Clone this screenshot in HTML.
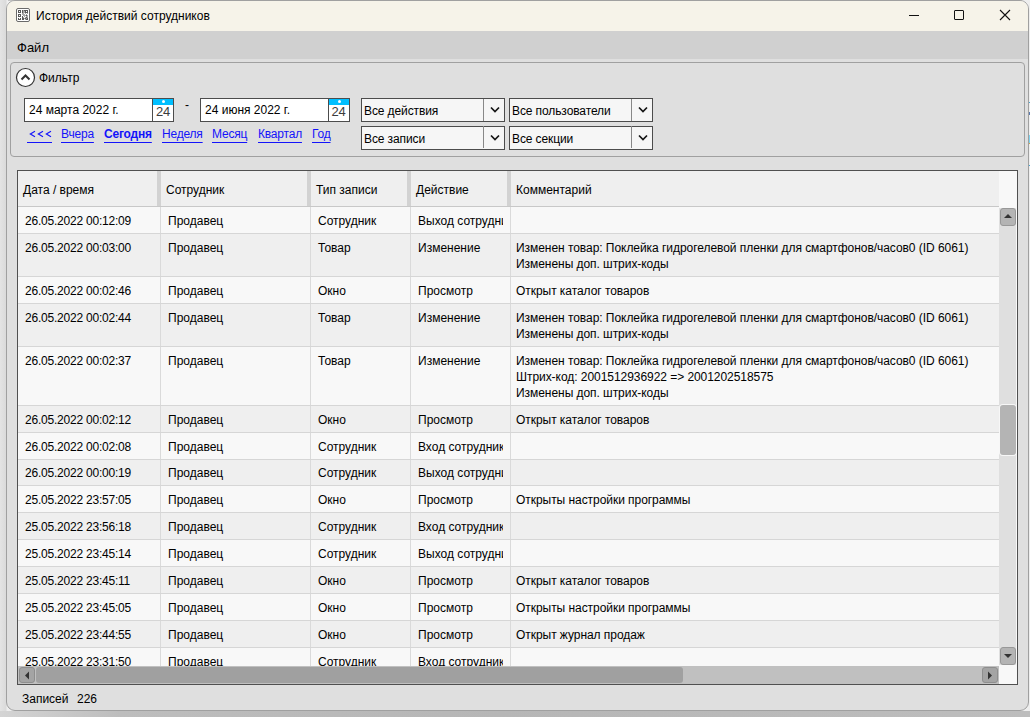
<!DOCTYPE html>
<html><head><meta charset="utf-8">
<style>
*{box-sizing:border-box;margin:0;padding:0}
html,body{width:1030px;height:717px;overflow:hidden;background:#ECECEC;font-family:"Liberation Sans",sans-serif;font-size:12px;color:#000}
.a{position:absolute}
#bg{left:0;top:0;width:1030px;height:717px;background:linear-gradient(90deg,#E4E4E4 0px,#DADADA 6px,#EEEEEE 7px)}
#bgb{left:0;top:711px;width:1030px;height:6px;background:linear-gradient(90deg,#D4D4D4 0px,#BDBDBD 120px,#B6B6B6 500px,#BDBDBD 1030px)}
#bgt{left:8px;top:0;width:1014px;height:1px;background:#C4C4C4}
#win{left:6px;top:0px;width:1023px;height:711px;border:1px solid #A0A0A0;border-radius:9px;background:#DFDFDF;overflow:hidden}
#title{left:7px;top:1px;width:1021px;height:30px;background:#F6F3E9;border-radius:8px 8px 0 0}
#menu{left:7px;top:31px;width:1021px;height:28px;background:#D0D0D0}
.t{position:absolute;white-space:nowrap;line-height:16px}
#grp{left:10px;top:62px;width:1015px;height:95px;border:1px solid #A0A0A0;border-radius:4px;background:#DFDFDF}
.box{position:absolute;background:#fff;border:1px solid #4C4C4C}
.cb{position:absolute;background:#F6F6F6;border:1px solid #4C4C4C}
.lk{position:absolute;color:#1010F0;text-decoration:underline;text-underline-offset:4px;text-decoration-skip-ink:none;letter-spacing:-0.2px;color:#1414FA;white-space:nowrap;line-height:16px}
#table{left:17px;top:170px;width:1001px;height:515px;border:1px solid #505050;background:#F8F8F8}
#hdr{left:18px;top:171px;width:981px;height:35px;background:#EFEFEF}
#hdrline{left:18px;top:206px;width:981px;height:1px;background:#C8C8C8}
.hs{position:absolute;top:171px;width:4px;height:35px;background:#D2D2D2}
#grid{left:18px;top:207px;width:981px;height:459px;overflow:hidden}
.row{position:absolute;left:0;width:981px}
.d{letter-spacing:-0.22px}
.m{letter-spacing:-0.05px}
.c{position:absolute;top:0;height:100%;padding-top:6px;line-height:16px;white-space:nowrap;overflow:hidden}
.vl{position:absolute;top:0;width:1px;height:100%;background:#DADADA}
.hl{position:absolute;left:0;width:981px;height:1px;background:#D6D6D6}
</style></head><body>
<div id="bg" class="a"></div><div id="bgb" class="a"></div><div id="bgt" class="a"></div>
<div id="win" class="a"></div>
<div id="title" class="a"></div>
<!-- app icon -->
<svg class="a" style="left:16px;top:8px" width="14" height="14" viewBox="0 0 14 14"><rect x="0.5" y="0.5" width="13" height="13" rx="1.5" fill="#fff" stroke="#6A6A6A"/><rect x="2" y="2" width="1" height="1" fill="#5A5A5A"/><rect x="3" y="2" width="1" height="1" fill="#5A5A5A"/><rect x="4" y="2" width="1" height="1" fill="#5A5A5A"/><rect x="6" y="2" width="1" height="1" fill="#5A5A5A"/><rect x="7" y="2" width="1" height="1" fill="#A8A8A8"/><rect x="8" y="2" width="1" height="1" fill="#5A5A5A"/><rect x="9" y="2" width="1" height="1" fill="#5A5A5A"/><rect x="10" y="2" width="1" height="1" fill="#5A5A5A"/><rect x="11" y="2" width="1" height="1" fill="#5A5A5A"/><rect x="2" y="3" width="1" height="1" fill="#5A5A5A"/><rect x="4" y="3" width="1" height="1" fill="#5A5A5A"/><rect x="6" y="3" width="1" height="1" fill="#5A5A5A"/><rect x="7" y="3" width="1" height="1" fill="#A8A8A8"/><rect x="8" y="3" width="1" height="1" fill="#A8A8A8"/><rect x="9" y="3" width="1" height="1" fill="#5A5A5A"/><rect x="11" y="3" width="1" height="1" fill="#5A5A5A"/><rect x="2" y="4" width="1" height="1" fill="#5A5A5A"/><rect x="3" y="4" width="1" height="1" fill="#5A5A5A"/><rect x="4" y="4" width="1" height="1" fill="#5A5A5A"/><rect x="6" y="4" width="1" height="1" fill="#5A5A5A"/><rect x="7" y="4" width="1" height="1" fill="#A8A8A8"/><rect x="8" y="4" width="1" height="1" fill="#A8A8A8"/><rect x="9" y="4" width="1" height="1" fill="#5A5A5A"/><rect x="10" y="4" width="1" height="1" fill="#5A5A5A"/><rect x="11" y="4" width="1" height="1" fill="#5A5A5A"/><rect x="6" y="5" width="1" height="1" fill="#A8A8A8"/><rect x="7" y="5" width="1" height="1" fill="#A8A8A8"/><rect x="9" y="5" width="1" height="1" fill="#A8A8A8"/><rect x="11" y="5" width="1" height="1" fill="#A8A8A8"/><rect x="2" y="6" width="1" height="1" fill="#5A5A5A"/><rect x="3" y="6" width="1" height="1" fill="#5A5A5A"/><rect x="4" y="6" width="1" height="1" fill="#5A5A5A"/><rect x="6" y="6" width="1" height="1" fill="#A8A8A8"/><rect x="7" y="6" width="1" height="1" fill="#A8A8A8"/><rect x="8" y="6" width="1" height="1" fill="#A8A8A8"/><rect x="10" y="6" width="1" height="1" fill="#A8A8A8"/><rect x="2" y="7" width="1" height="1" fill="#5A5A5A"/><rect x="4" y="7" width="1" height="1" fill="#5A5A5A"/><rect x="7" y="7" width="1" height="1" fill="#A8A8A8"/><rect x="8" y="7" width="1" height="1" fill="#A8A8A8"/><rect x="9" y="7" width="1" height="1" fill="#A8A8A8"/><rect x="10" y="7" width="1" height="1" fill="#5A5A5A"/><rect x="11" y="7" width="1" height="1" fill="#A8A8A8"/><rect x="2" y="8" width="1" height="1" fill="#5A5A5A"/><rect x="3" y="8" width="1" height="1" fill="#5A5A5A"/><rect x="4" y="8" width="1" height="1" fill="#5A5A5A"/><rect x="6" y="8" width="1" height="1" fill="#5A5A5A"/><rect x="8" y="8" width="1" height="1" fill="#A8A8A8"/><rect x="10" y="8" width="1" height="1" fill="#A8A8A8"/><rect x="11" y="8" width="1" height="1" fill="#A8A8A8"/><rect x="6" y="9" width="1" height="1" fill="#5A5A5A"/><rect x="7" y="9" width="1" height="1" fill="#A8A8A8"/><rect x="9" y="9" width="1" height="1" fill="#A8A8A8"/><rect x="10" y="9" width="1" height="1" fill="#5A5A5A"/><rect x="11" y="9" width="1" height="1" fill="#A8A8A8"/><rect x="2" y="10" width="1" height="1" fill="#5A5A5A"/><rect x="4" y="10" width="1" height="1" fill="#5A5A5A"/><rect x="6" y="10" width="1" height="1" fill="#5A5A5A"/><rect x="7" y="10" width="1" height="1" fill="#5A5A5A"/><rect x="8" y="10" width="1" height="1" fill="#A8A8A8"/><rect x="9" y="10" width="1" height="1" fill="#5A5A5A"/><rect x="10" y="10" width="1" height="1" fill="#A8A8A8"/><rect x="11" y="10" width="1" height="1" fill="#5A5A5A"/><rect x="2" y="11" width="1" height="1" fill="#5A5A5A"/><rect x="3" y="11" width="1" height="1" fill="#5A5A5A"/><rect x="4" y="11" width="1" height="1" fill="#5A5A5A"/><rect x="6" y="11" width="1" height="1" fill="#5A5A5A"/><rect x="7" y="11" width="1" height="1" fill="#5A5A5A"/><rect x="9" y="11" width="1" height="1" fill="#A8A8A8"/><rect x="10" y="11" width="1" height="1" fill="#5A5A5A"/><rect x="11" y="11" width="1" height="1" fill="#5A5A5A"/></svg>
<div class="t" style="left:36px;top:8px">История действий сотрудников</div>
<!-- window controls -->
<div class="a" style="left:909px;top:15px;width:10px;height:1px;background:#111"></div>
<div class="a" style="left:954px;top:10px;width:10px;height:10px;border:1px solid #111;border-radius:1px"></div>
<svg class="a" style="left:999px;top:9px" width="12" height="12" viewBox="0 0 12 12"><path d="M1 1L11 11M11 1L1 11" stroke="#111" stroke-width="1.1"/></svg>
<div id="menu" class="a"></div>
<div class="t" style="left:17px;top:40px;font-size:13px">Файл</div>

<div id="grp" class="a"></div>
<svg class="a" style="left:15px;top:67px" width="21" height="21" viewBox="0 0 21 21"><circle cx="10.5" cy="10.5" r="9" fill="#fff" stroke="#333" stroke-width="1.2"/><path d="M6.5 12.5L10.5 8.5L14.5 12.5" fill="none" stroke="#333" stroke-width="2"/></svg>
<div class="t" style="left:39px;top:70px">Фильтр</div>

<!-- date boxes -->
<div class="box" style="left:24px;top:98px;width:150px;height:24px"></div>
<div class="t" style="left:29px;top:102px">24 марта 2022 г.</div>
<div class="a" style="left:152px;top:99px;width:1px;height:22px;background:#4C4C4C"></div>
<div class="a" style="left:153px;top:99px;width:20px;height:6px;background:#00BFFF"></div>
<div class="a" style="left:162px;top:100px;width:3px;height:3px;background:#fff;border-radius:50%"></div>
<div class="t" style="left:156px;top:104px;font-size:13px;color:#3C3C3C;letter-spacing:-0.3px">24</div>

<div class="t" style="left:185px;top:97px">-</div>

<div class="box" style="left:200px;top:98px;width:150px;height:24px"></div>
<div class="t" style="left:205px;top:102px">24 июня 2022 г.</div>
<div class="a" style="left:328px;top:99px;width:1px;height:22px;background:#4C4C4C"></div>
<div class="a" style="left:329px;top:99px;width:20px;height:6px;background:#00BFFF"></div>
<div class="a" style="left:338px;top:100px;width:3px;height:3px;background:#fff;border-radius:50%"></div>
<div class="t" style="left:331.5px;top:104px;font-size:13px;color:#3C3C3C;letter-spacing:-0.3px">24</div>

<!-- links -->
<svg class="a" style="left:27.5px;top:129px" width="26" height="10" viewBox="0 0 26 10"><path d="M7 2.2L2.3 5L7 7.8M15 2.2L10.3 5L15 7.8M23 2.2L18.3 5L23 7.8" fill="none" stroke="#1414FA" stroke-width="1.15"/></svg>
<div class="a" style="left:27px;top:142px;width:25px;height:1px;background:#1414FA"></div>
<div class="lk" style="left:61px;top:126px">Вчера</div>
<div class="lk" style="left:104px;top:126px;font-weight:bold">Сегодня</div>
<div class="lk" style="left:162px;top:126px">Неделя</div>
<div class="lk" style="left:212px;top:126px">Месяц</div>
<div class="lk" style="left:258px;top:126px">Квартал</div>
<div class="lk" style="left:312px;top:126px">Год</div>

<!-- combos -->
<div class="cb" style="left:361px;top:98px;width:144px;height:24px"></div>
<div class="a" style="left:483px;top:99px;width:1px;height:22px;background:#888"></div>
<div class="t" style="left:364px;top:103px;letter-spacing:-0.1px">Все действия</div>
<svg class="a" style="left:490px;top:106px" width="10" height="7" viewBox="0 0 10 7"><path d="M1 1.5L5 5.5L9 1.5" fill="none" stroke="#151515" stroke-width="1.7"/></svg>

<div class="cb" style="left:509px;top:98px;width:144px;height:24px"></div>
<div class="a" style="left:631px;top:99px;width:1px;height:22px;background:#888"></div>
<div class="t" style="left:512px;top:103px;letter-spacing:-0.1px">Все пользователи</div>
<svg class="a" style="left:638px;top:106px" width="10" height="7" viewBox="0 0 10 7"><path d="M1 1.5L5 5.5L9 1.5" fill="none" stroke="#151515" stroke-width="1.7"/></svg>

<div class="cb" style="left:361px;top:126px;width:144px;height:24px"></div>
<div class="a" style="left:483px;top:126px;width:1px;height:22px;background:#888"></div>
<div class="t" style="left:364px;top:131px;letter-spacing:-0.1px">Все записи</div>
<svg class="a" style="left:490px;top:134px" width="10" height="7" viewBox="0 0 10 7"><path d="M1 1.5L5 5.5L9 1.5" fill="none" stroke="#151515" stroke-width="1.7"/></svg>

<div class="cb" style="left:509px;top:126px;width:144px;height:24px"></div>
<div class="a" style="left:631px;top:126px;width:1px;height:22px;background:#888"></div>
<div class="t" style="left:512px;top:131px;letter-spacing:-0.1px">Все секции</div>
<svg class="a" style="left:638px;top:134px" width="10" height="7" viewBox="0 0 10 7"><path d="M1 1.5L5 5.5L9 1.5" fill="none" stroke="#151515" stroke-width="1.7"/></svg>

<!-- table -->
<div id="table" class="a"></div>
<div id="hdr" class="a"></div>
<div id="hdrline" class="a"></div>
<div class="hs" style="left:157px"></div>
<div class="hs" style="left:307px"></div>
<div class="hs" style="left:407px"></div>
<div class="hs" style="left:507px"></div>
<div class="t" style="left:23px;top:182px">Дата / время</div>
<div class="t" style="left:166px;top:182px">Сотрудник</div>
<div class="t" style="left:316px;top:182px">Тип записи</div>
<div class="t" style="left:416px;top:182px">Действие</div>
<div class="t" style="left:516px;top:182px">Комментарий</div>

<div id="grid" class="a">
<div class="row" style="top:0px;height:26px;background:#F8F8F8"><div class="c d" style="left:0px;width:135px;padding-left:7px;">26.05.2022 00:12:09</div><div class="c" style="left:143px;width:142px;padding-left:7px;">Продавец</div><div class="c" style="left:293px;width:92px;padding-left:7px;">Сотрудник</div><div class="c" style="left:393px;width:92px;padding-left:7px;">Выход сотрудника</div><div class="c m" style="left:493px;width:483px;padding-left:5px;"></div><div class="vl" style="left:142px"></div><div class="vl" style="left:292px"></div><div class="vl" style="left:392px"></div><div class="vl" style="left:492px"></div></div><div class="hl" style="top:26px"></div>
<div class="row" style="top:27px;height:42px;background:#EFEFEF"><div class="c d" style="left:0px;width:135px;padding-left:7px;">26.05.2022 00:03:00</div><div class="c" style="left:143px;width:142px;padding-left:7px;">Продавец</div><div class="c" style="left:293px;width:92px;padding-left:7px;">Товар</div><div class="c" style="left:393px;width:92px;padding-left:7px;">Изменение</div><div class="c m" style="left:493px;width:483px;padding-left:5px;">Изменен товар: Поклейка гидрогелевой пленки для смартфонов/часов0 (ID 6061)<br>Изменены доп. штрих-коды</div><div class="vl" style="left:142px"></div><div class="vl" style="left:292px"></div><div class="vl" style="left:392px"></div><div class="vl" style="left:492px"></div></div><div class="hl" style="top:69px"></div>
<div class="row" style="top:70px;height:26px;background:#F8F8F8"><div class="c d" style="left:0px;width:135px;padding-left:7px;">26.05.2022 00:02:46</div><div class="c" style="left:143px;width:142px;padding-left:7px;">Продавец</div><div class="c" style="left:293px;width:92px;padding-left:7px;">Окно</div><div class="c" style="left:393px;width:92px;padding-left:7px;">Просмотр</div><div class="c m" style="left:493px;width:483px;padding-left:5px;">Открыт каталог товаров</div><div class="vl" style="left:142px"></div><div class="vl" style="left:292px"></div><div class="vl" style="left:392px"></div><div class="vl" style="left:492px"></div></div><div class="hl" style="top:96px"></div>
<div class="row" style="top:97px;height:42px;background:#EFEFEF"><div class="c d" style="left:0px;width:135px;padding-left:7px;">26.05.2022 00:02:44</div><div class="c" style="left:143px;width:142px;padding-left:7px;">Продавец</div><div class="c" style="left:293px;width:92px;padding-left:7px;">Товар</div><div class="c" style="left:393px;width:92px;padding-left:7px;">Изменение</div><div class="c m" style="left:493px;width:483px;padding-left:5px;">Изменен товар: Поклейка гидрогелевой пленки для смартфонов/часов0 (ID 6061)<br>Изменены доп. штрих-коды</div><div class="vl" style="left:142px"></div><div class="vl" style="left:292px"></div><div class="vl" style="left:392px"></div><div class="vl" style="left:492px"></div></div><div class="hl" style="top:139px"></div>
<div class="row" style="top:140px;height:58px;background:#F8F8F8"><div class="c d" style="left:0px;width:135px;padding-left:7px;">26.05.2022 00:02:37</div><div class="c" style="left:143px;width:142px;padding-left:7px;">Продавец</div><div class="c" style="left:293px;width:92px;padding-left:7px;">Товар</div><div class="c" style="left:393px;width:92px;padding-left:7px;">Изменение</div><div class="c m" style="left:493px;width:483px;padding-left:5px;">Изменен товар: Поклейка гидрогелевой пленки для смартфонов/часов0 (ID 6061)<br>Штрих-код: 2001512936922 =&gt; 2001202518575<br>Изменены доп. штрих-коды</div><div class="vl" style="left:142px"></div><div class="vl" style="left:292px"></div><div class="vl" style="left:392px"></div><div class="vl" style="left:492px"></div></div><div class="hl" style="top:198px"></div>
<div class="row" style="top:199px;height:26px;background:#EFEFEF"><div class="c d" style="left:0px;width:135px;padding-left:7px;">26.05.2022 00:02:12</div><div class="c" style="left:143px;width:142px;padding-left:7px;">Продавец</div><div class="c" style="left:293px;width:92px;padding-left:7px;">Окно</div><div class="c" style="left:393px;width:92px;padding-left:7px;">Просмотр</div><div class="c m" style="left:493px;width:483px;padding-left:5px;">Открыт каталог товаров</div><div class="vl" style="left:142px"></div><div class="vl" style="left:292px"></div><div class="vl" style="left:392px"></div><div class="vl" style="left:492px"></div></div><div class="hl" style="top:225px"></div>
<div class="row" style="top:226px;height:26px;background:#F8F8F8"><div class="c d" style="left:0px;width:135px;padding-left:7px;">26.05.2022 00:02:08</div><div class="c" style="left:143px;width:142px;padding-left:7px;">Продавец</div><div class="c" style="left:293px;width:92px;padding-left:7px;">Сотрудник</div><div class="c" style="left:393px;width:92px;padding-left:7px;">Вход сотрудника</div><div class="c m" style="left:493px;width:483px;padding-left:5px;"></div><div class="vl" style="left:142px"></div><div class="vl" style="left:292px"></div><div class="vl" style="left:392px"></div><div class="vl" style="left:492px"></div></div><div class="hl" style="top:252px"></div>
<div class="row" style="top:253px;height:25px;background:#EFEFEF"><div class="c d" style="left:0px;width:135px;padding-left:7px;padding-top:5px;">26.05.2022 00:00:19</div><div class="c" style="left:143px;width:142px;padding-left:7px;padding-top:5px;">Продавец</div><div class="c" style="left:293px;width:92px;padding-left:7px;padding-top:5px;">Сотрудник</div><div class="c" style="left:393px;width:92px;padding-left:7px;padding-top:5px;">Выход сотрудника</div><div class="c m" style="left:493px;width:483px;padding-left:5px;padding-top:5px;"></div><div class="vl" style="left:142px"></div><div class="vl" style="left:292px"></div><div class="vl" style="left:392px"></div><div class="vl" style="left:492px"></div></div><div class="hl" style="top:278px"></div>
<div class="row" style="top:279px;height:26px;background:#F8F8F8"><div class="c d" style="left:0px;width:135px;padding-left:7px;">25.05.2022 23:57:05</div><div class="c" style="left:143px;width:142px;padding-left:7px;">Продавец</div><div class="c" style="left:293px;width:92px;padding-left:7px;">Окно</div><div class="c" style="left:393px;width:92px;padding-left:7px;">Просмотр</div><div class="c m" style="left:493px;width:483px;padding-left:5px;">Открыты настройки программы</div><div class="vl" style="left:142px"></div><div class="vl" style="left:292px"></div><div class="vl" style="left:392px"></div><div class="vl" style="left:492px"></div></div><div class="hl" style="top:305px"></div>
<div class="row" style="top:306px;height:26px;background:#EFEFEF"><div class="c d" style="left:0px;width:135px;padding-left:7px;">25.05.2022 23:56:18</div><div class="c" style="left:143px;width:142px;padding-left:7px;">Продавец</div><div class="c" style="left:293px;width:92px;padding-left:7px;">Сотрудник</div><div class="c" style="left:393px;width:92px;padding-left:7px;">Вход сотрудника</div><div class="c m" style="left:493px;width:483px;padding-left:5px;"></div><div class="vl" style="left:142px"></div><div class="vl" style="left:292px"></div><div class="vl" style="left:392px"></div><div class="vl" style="left:492px"></div></div><div class="hl" style="top:332px"></div>
<div class="row" style="top:333px;height:26px;background:#F8F8F8"><div class="c d" style="left:0px;width:135px;padding-left:7px;">25.05.2022 23:45:14</div><div class="c" style="left:143px;width:142px;padding-left:7px;">Продавец</div><div class="c" style="left:293px;width:92px;padding-left:7px;">Сотрудник</div><div class="c" style="left:393px;width:92px;padding-left:7px;">Выход сотрудника</div><div class="c m" style="left:493px;width:483px;padding-left:5px;"></div><div class="vl" style="left:142px"></div><div class="vl" style="left:292px"></div><div class="vl" style="left:392px"></div><div class="vl" style="left:492px"></div></div><div class="hl" style="top:359px"></div>
<div class="row" style="top:360px;height:26px;background:#EFEFEF"><div class="c d" style="left:0px;width:135px;padding-left:7px;">25.05.2022 23:45:11</div><div class="c" style="left:143px;width:142px;padding-left:7px;">Продавец</div><div class="c" style="left:293px;width:92px;padding-left:7px;">Окно</div><div class="c" style="left:393px;width:92px;padding-left:7px;">Просмотр</div><div class="c m" style="left:493px;width:483px;padding-left:5px;">Открыт каталог товаров</div><div class="vl" style="left:142px"></div><div class="vl" style="left:292px"></div><div class="vl" style="left:392px"></div><div class="vl" style="left:492px"></div></div><div class="hl" style="top:386px"></div>
<div class="row" style="top:387px;height:26px;background:#F8F8F8"><div class="c d" style="left:0px;width:135px;padding-left:7px;">25.05.2022 23:45:05</div><div class="c" style="left:143px;width:142px;padding-left:7px;">Продавец</div><div class="c" style="left:293px;width:92px;padding-left:7px;">Окно</div><div class="c" style="left:393px;width:92px;padding-left:7px;">Просмотр</div><div class="c m" style="left:493px;width:483px;padding-left:5px;">Открыты настройки программы</div><div class="vl" style="left:142px"></div><div class="vl" style="left:292px"></div><div class="vl" style="left:392px"></div><div class="vl" style="left:492px"></div></div><div class="hl" style="top:413px"></div>
<div class="row" style="top:414px;height:26px;background:#EFEFEF"><div class="c d" style="left:0px;width:135px;padding-left:7px;">25.05.2022 23:44:55</div><div class="c" style="left:143px;width:142px;padding-left:7px;">Продавец</div><div class="c" style="left:293px;width:92px;padding-left:7px;">Окно</div><div class="c" style="left:393px;width:92px;padding-left:7px;">Просмотр</div><div class="c m" style="left:493px;width:483px;padding-left:5px;">Открыт журнал продаж</div><div class="vl" style="left:142px"></div><div class="vl" style="left:292px"></div><div class="vl" style="left:392px"></div><div class="vl" style="left:492px"></div></div><div class="hl" style="top:440px"></div>
<div class="row" style="top:441px;height:26px;background:#F8F8F8"><div class="c d" style="left:0px;width:135px;padding-left:7px;">25.05.2022 23:31:50</div><div class="c" style="left:143px;width:142px;padding-left:7px;">Продавец</div><div class="c" style="left:293px;width:92px;padding-left:7px;">Сотрудник</div><div class="c" style="left:393px;width:92px;padding-left:7px;">Вход сотрудника</div><div class="c m" style="left:493px;width:483px;padding-left:5px;"></div><div class="vl" style="left:142px"></div><div class="vl" style="left:292px"></div><div class="vl" style="left:392px"></div><div class="vl" style="left:492px"></div></div><div class="hl" style="top:467px"></div>
</div>

<!-- vertical scrollbar -->
<div class="a" style="left:999px;top:208px;width:17px;height:457px;background:#DFDFDF"></div>
<div class="a" style="left:1000px;top:208px;width:16px;height:18px;background:#B4B4B4;border:1px solid #989898;border-radius:3px"></div>
<svg class="a" style="left:1003px;top:213px" width="10" height="6" viewBox="0 0 10 6"><path d="M1 5L5 1L9 5Z" fill="#333"/></svg>
<div class="a" style="left:1000px;top:405px;width:16px;height:50px;background:#B4B4B4;border-radius:3px;box-shadow:0 0 0 1px rgba(255,255,255,0.75)"></div>
<div class="a" style="left:1000px;top:647px;width:16px;height:18px;background:#B4B4B4;border:1px solid #989898;border-radius:3px"></div>
<svg class="a" style="left:1003px;top:653px" width="10" height="6" viewBox="0 0 10 6"><path d="M1 1L5 5L9 1Z" fill="#333"/></svg>

<!-- horizontal scrollbar -->
<div class="a" style="left:18px;top:666px;width:981px;height:18px;background:#C0C0C0"></div>
<div class="a" style="left:19px;top:667px;width:16px;height:16px;background:#A4A4A4;border:1px solid #8E8E8E;border-radius:3px"></div>
<svg class="a" style="left:24px;top:671px" width="6" height="9" viewBox="0 0 6 9"><path d="M5 0.5L1 4.5L5 8.5Z" fill="#333"/></svg>
<div class="a" style="left:36px;top:667px;width:647px;height:16px;background:#A0A0A0;border-radius:3px"></div>
<div class="a" style="left:982px;top:667px;width:16px;height:16px;background:#A4A4A4;border:1px solid #8E8E8E;border-radius:3px"></div>
<svg class="a" style="left:987px;top:671px" width="6" height="9" viewBox="0 0 6 9"><path d="M1 0.5L5 4.5L1 8.5Z" fill="#333"/></svg>

<!-- status -->
<div class="t" style="left:22px;top:691px">Записей</div>
<div class="t" style="left:77px;top:691px">226</div>
<div class="a" style="left:1029px;top:102px;width:1px;height:1px;background:#4AA8D8"></div>
<div class="a" style="left:1029px;top:112px;width:1px;height:3px;background:#5A7AB0"></div>
<div class="a" style="left:1029px;top:135px;width:1px;height:8px;background:#7FD4F0"></div>
<div class="a" style="left:1029px;top:143px;width:1px;height:1px;background:#D8A040"></div>
<div class="a" style="left:1029px;top:165px;width:1px;height:1px;background:#4AA8D8"></div>
</body></html>
